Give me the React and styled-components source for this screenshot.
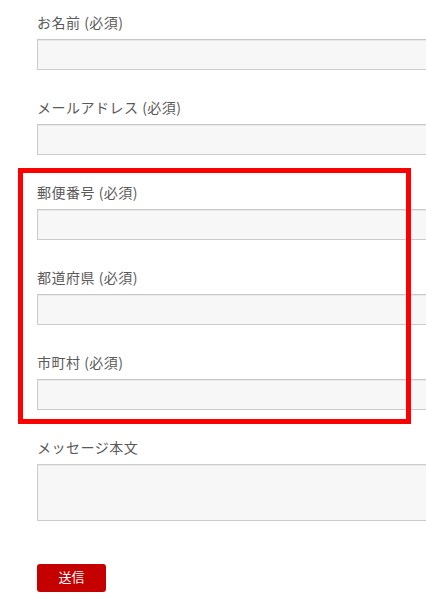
import React from "react";
import styled, { createGlobalStyle } from "styled-components";

const Global = createGlobalStyle`
  html, body { margin: 0; padding: 0; background: #fff; overflow: hidden; }
  body { font-family: "Noto Sans CJK JP", "Noto Sans", sans-serif; }
`;

const Page = styled.div`
  position: relative;
  width: 426px;
  height: 606px;
  overflow: hidden;
`;

const Form = styled.form`
  display: flex;
  flex-direction: column;
  padding: 12px 0 0 37px;
  width: 460px;
`;

const Field = styled.div`
  display: flex;
  flex-direction: column;
  gap: 7px;
  margin-bottom: 27px;
`;

const Label = styled.label`
  display: block;
  font-size: 14px;
  line-height: 20px;
  letter-spacing: 0.5px;
  color: #5a5a5a;
`;

const Input = styled.input`
  box-sizing: border-box;
  width: 100%;
  height: 31px;
  margin: 0;
  border: 1px solid #ccc;
  border-top-color: #c8c8c8;
  background: #f7f7f7;
  box-shadow: inset 0 1px 1px rgba(0, 0, 0, 0.06);
  outline: none;
`;

const TextArea = styled.textarea`
  box-sizing: border-box;
  width: 100%;
  height: 57px;
  margin: 0;
  border: 1px solid #ccc;
  background: #f7f7f7;
  box-shadow: inset 0 1px 1px rgba(0, 0, 0, 0.06);
  resize: none;
  outline: none;
`;

const Actions = styled.div`
  padding-top: 15px;
`;

const Submit = styled.button`
  width: 69px;
  height: 28px;
  border: none;
  border-radius: 3px;
  background: #c50000;
  color: #fff;
  font-family: "Noto Sans CJK JP", sans-serif;
  font-size: 13px;
  line-height: 26px;
  padding: 0 0 2px;
  cursor: pointer;
`;

const Highlight = styled.div`
  position: absolute;
  left: 18px;
  top: 168px;
  width: 393px;
  height: 256px;
  box-sizing: border-box;
  border: 5px solid #ff0000;
  pointer-events: none;
`;

const fields = [
  "お名前 (必須)",
  "メールアドレス (必須)",
  "郵便番号 (必須)",
  "都道府県 (必須)",
  "市町村 (必須)",
];

export default function App() {
  return (
    <Page>
      <Global />
      <Form onSubmit={(e) => e.preventDefault()}>
        {fields.map((f) => (
          <Field key={f}>
            <Label>{f}</Label>
            <Input type="text" />
          </Field>
        ))}
        <Field>
          <Label>メッセージ本文</Label>
          <TextArea />
        </Field>
        <Actions>
          <Submit type="submit">送信</Submit>
        </Actions>
      </Form>
      <Highlight />
    </Page>
  );
}
